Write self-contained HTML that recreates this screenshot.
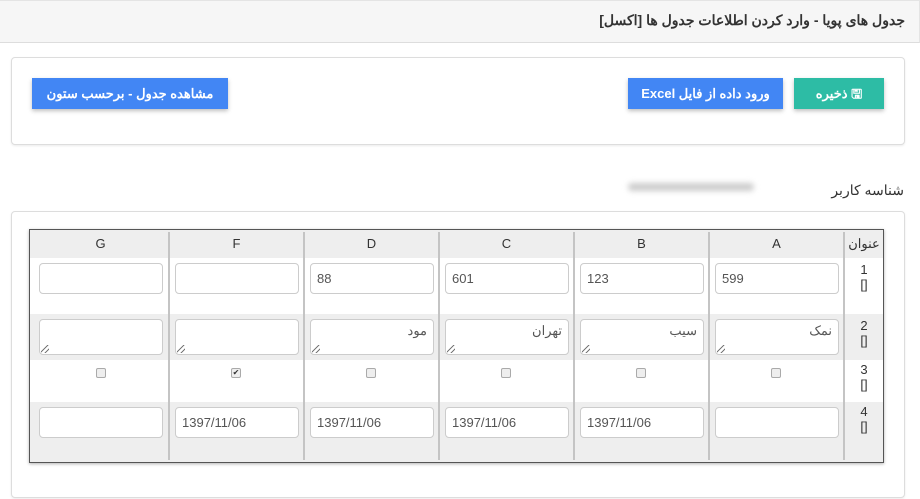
<!DOCTYPE html>
<html><head><meta charset="utf-8"><style>
*{box-sizing:border-box;margin:0;padding:0}
body{width:920px;height:499px;background:#fff;font-family:"Liberation Sans","Noto Sans CJK SC",sans-serif;color:#333;position:relative;overflow:hidden;font-size:13px}
.a{position:absolute}
.hdr{left:0;top:0;width:920px;height:43px;background:#f6f6f6;border-bottom:1px solid #ddd;border-top:1px solid #e4e4e4;border-right:1px solid #e4e4e4}
.panel{border:1px solid #ddd;border-radius:4px;background:#fff;box-shadow:0 1px 2px rgba(0,0,0,.08)}
.btn{color:#fff;font-weight:bold;font-size:13px;text-align:center;line-height:31px;box-shadow:0 2px 4px rgba(0,0,0,.25);direction:rtl}
.tbl{left:29px;top:229px;width:855px;height:234px;border:1px solid #555;background:#eee;box-shadow:0 1px 3px rgba(0,0,0,.3)}
.row{position:absolute;left:0;width:853px}
.vl{position:absolute;top:2px;width:2px;height:228px;background:#c4c4c4}
.inp{position:absolute;width:124px;height:31px;border:1px solid #ccc;border-radius:4px;background:#fff;font-size:13px;padding:0 6px;line-height:29px;color:#555}
.ta{height:36px;direction:rtl;line-height:18px;padding-top:2px}
.ta:after{content:"";position:absolute;left:1px;bottom:1px;width:8px;height:8px;background:linear-gradient(135deg,transparent 40%,#777 40%,#777 50%,transparent 50%,transparent 70%,#777 70%,#777 80%,transparent 80%)}
.cb{position:absolute;width:10px;height:10px;border:1px solid #aaa;border-radius:2px;background:#eee;font-size:8px;line-height:8px;text-align:center}
.h{position:absolute;top:6px;font-size:13px;text-align:center;width:135px}
.rn{position:absolute;left:816px;width:36px;text-align:center;font-size:13px;line-height:15px}
</style></head><body>
<div class="a hdr"></div>
<div class="a" style="right:15px;top:12px;font-size:14px;font-weight:bold;direction:rtl;color:#333">جدول های پویا - وارد کردن اطلاعات جدول ها [اکسل]</div>
<div class="a panel" style="left:11px;top:57px;width:894px;height:88px"></div>
<div class="a btn" style="left:794px;top:78px;width:90px;height:31px;background:#2dbca5">&#x1F5AB; ذخیره</div>
<div class="a btn" style="left:628px;top:78px;width:155px;height:31px;background:#4286f4">ورود داده از فایل Excel</div>
<div class="a btn" style="left:32px;top:78px;width:196px;height:31px;background:#4286f4">مشاهده جدول - برحسب ستون</div>
<div class="a" style="right:16px;top:182px;font-size:14px;direction:rtl">شناسه کاربر</div>
<div class="a" style="left:628px;top:183px;width:126px;height:8px;background:#ccc;filter:blur(3px);border-radius:4px"></div>
<div class="a panel" style="left:11px;top:211px;width:894px;height:287px"></div>
<div class="a tbl">
 <div class="row" style="top:2px;height:26px;background:#eee"></div>
 <div class="row" style="top:28px;height:56px;background:#fff"></div>
 <div class="row" style="top:84px;height:46px;background:#eee"></div>
 <div class="row" style="top:130px;height:42px;background:#fff"></div>
 <div class="row" style="top:172px;height:58px;background:#eee"></div>
 <div class="vl" style="left:138px"></div><div class="vl" style="left:273px"></div><div class="vl" style="left:408px"></div><div class="vl" style="left:543px"></div><div class="vl" style="left:678px"></div><div class="vl" style="left:813px"></div>
 <div class="h" style="left:3px">G</div><div class="h" style="left:139px">F</div><div class="h" style="left:274px">D</div><div class="h" style="left:409px">C</div><div class="h" style="left:544px">B</div><div class="h" style="left:679px">A</div>
 <div class="h" style="left:814px;width:40px;font-size:13px">عنوان</div>
 <div class="rn" style="top:32px">1<br>[]</div><div class="rn" style="top:88px">2<br>[]</div><div class="rn" style="top:132px">3<br>[]</div><div class="rn" style="top:174px">4<br>[]</div>
 <div class="inp" style="left:9px;top:33px"></div><div class="inp" style="left:145px;top:33px"></div>
 <div class="inp" style="left:280px;top:33px">88</div><div class="inp" style="left:415px;top:33px">601</div>
 <div class="inp" style="left:550px;top:33px">123</div><div class="inp" style="left:685px;top:33px">599</div>
 <div class="inp ta" style="left:9px;top:89px"></div><div class="inp ta" style="left:145px;top:89px"></div>
 <div class="inp ta" style="left:280px;top:89px">مود</div><div class="inp ta" style="left:415px;top:89px">تهران</div>
 <div class="inp ta" style="left:550px;top:89px">سیب</div><div class="inp ta" style="left:685px;top:89px">نمک</div>
 <div class="cb" style="left:66px;top:138px"></div><div class="cb" style="left:201px;top:138px">✔</div>
 <div class="cb" style="left:336px;top:138px"></div><div class="cb" style="left:471px;top:138px"></div>
 <div class="cb" style="left:606px;top:138px"></div><div class="cb" style="left:741px;top:138px"></div>
 <div class="inp" style="left:9px;top:177px"></div><div class="inp" style="left:145px;top:177px">1397/11/06</div>
 <div class="inp" style="left:280px;top:177px">1397/11/06</div><div class="inp" style="left:415px;top:177px">1397/11/06</div>
 <div class="inp" style="left:550px;top:177px">1397/11/06</div><div class="inp" style="left:685px;top:177px"></div>
</div>
</body></html>
